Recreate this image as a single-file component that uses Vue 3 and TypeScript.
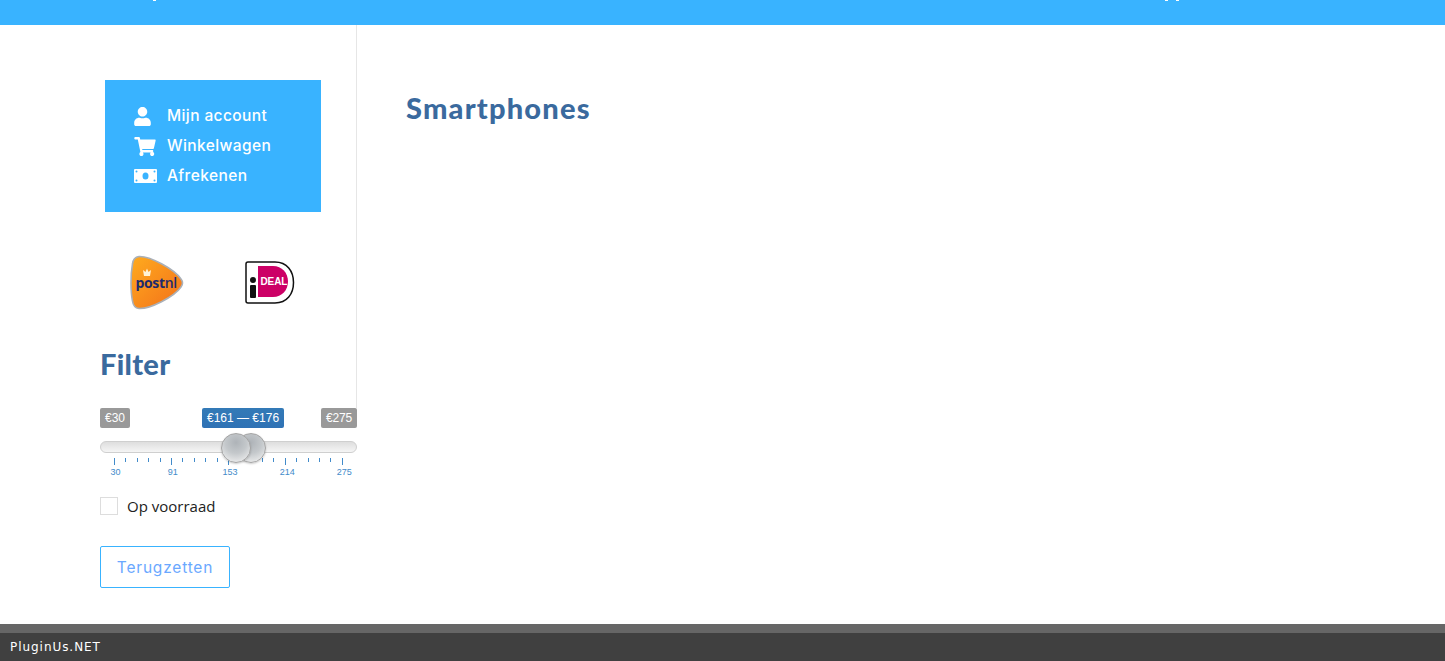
<script setup lang="ts">
const accountLinks = ["Mijn account", "Winkelwagen", "Afrekenen"];
const gridLabels = ["30", "91", "153", "214", "275"];
const ticks = Array.from({ length: 21 }, (_, i) => i % 5 === 0);
</script>

<template>
  <div class="page">
    <header class="topbar">
      <span class="desc" style="left: 153px"></span>
      <span class="desc" style="left: 1165px"></span>
      <span class="desc" style="left: 1176px"></span>
    </header>

    <main class="main">
      <aside class="sidebar">
        <div class="side-top">
          <div class="account">
            <a v-for="(link, i) in accountLinks" :key="link" class="account-link">
              <span class="account-icon">
                <svg v-if="i === 0" width="17" height="19" viewBox="0 0 448 512" fill="#fff">
                  <path d="M224 256c70.7 0 128-57.3 128-128S294.7 0 224 0 96 57.3 96 128s57.3 128 128 128zm89.6 32h-16.7c-22.2 10.2-46.9 16-72.9 16s-50.6-5.8-72.9-16h-16.7C60.2 288 0 348.2 0 422.4V464c0 26.5 21.5 48 48 48h352c26.5 0 48-21.5 48-48v-41.6c0-74.2-60.2-134.4-134.4-134.4z" />
                </svg>
                <svg v-else-if="i === 1" width="22" height="19" viewBox="0 0 576 512" fill="#fff">
                  <path d="M528.12 301.319l47.273-208C578.806 78.301 567.391 64 551.99 64H159.208l-9.166-44.81C147.758 8.021 137.93 0 126.529 0H24C10.745 0 0 10.745 0 24v16c0 13.255 10.745 24 24 24h69.883l70.248 343.435C147.325 417.1 136 435.222 136 456c0 30.928 25.072 56 56 56s56-25.072 56-56c0-15.674-6.447-29.835-16.824-40h209.647C430.447 426.165 424 440.326 424 456c0 30.928 25.072 56 56 56s56-25.072 56-56c0-22.172-12.888-41.332-31.579-50.405l5.517-24.276c3.413-15.018-8.002-29.319-23.403-29.319H218.117l-6.545-32h293.145c11.206 0 20.92-7.754 23.403-18.681z" />
                </svg>
                <svg v-else width="23" height="14" viewBox="0 0 23 14">
                  <rect width="23" height="14" rx="1" fill="#fff" />
                  <ellipse cx="11.5" cy="7" rx="3" ry="3.6" fill="#39b3ff" />
                  <circle cx="2.5" cy="2.5" r="1" fill="#39b3ff" />
                  <circle cx="20.5" cy="2.5" r="1" fill="#39b3ff" />
                  <circle cx="2.5" cy="11.5" r="1" fill="#39b3ff" />
                  <circle cx="20.5" cy="11.5" r="1" fill="#39b3ff" />
                </svg>
              </span>
              <span>{{ link }}</span>
            </a>
          </div>

          <div class="logos">
            <svg class="postnl" width="54" height="55" viewBox="0 0 54 55">
              <defs>
                <linearGradient id="pnl" x1="0" y1="0" x2="1" y2="1">
                  <stop offset="0" stop-color="#ffab1e" />
                  <stop offset="1" stop-color="#f2701a" />
                </linearGradient>
              </defs>
              <path d="M9 1.5C20 1 44 14 51 24Q54 28 51 32C44 42 20 54 9 53.5C5 53 3 50 2.5 46C.5 36 .5 20 2.5 9C3 4 5 2 9 1.5Z" fill="url(#pnl)" stroke="#aab0b8" stroke-width="1.6" />
              <path d="M14 21L13 15L15.500 17L17 13.500L18.500 17L21 15L20 21Z" fill="#fff3d6" />
              <text x="5.5" y="33" class="pnl-text" fill="#1d2a6d">post<tspan font-weight="600">nl</tspan></text>
            </svg>
            <svg class="ideal" width="50" height="43" viewBox="0 0 50 43">
              <path d="M3 1H30C42 1 48.500 10 48.500 21.500C48.500 33 42 42 30 42H3Q1 42 1 40V3Q1 1 3 1Z" fill="#fff" stroke="#111" stroke-width="1.5" />
              <path d="M13 5H28C37 5 43 12 43 20.500C43 29 37 36 28 36H13Z" fill="#cc0066" />
              <circle cx="8" cy="19" r="3" fill="#111" />
              <rect x="5" y="24" width="6" height="13" rx="1" fill="#111" />
              <text x="15.5" y="24" class="ideal-text" fill="#fff">DEAL</text>
            </svg>
          </div>

          <h2 class="heading filter-title">Filter</h2>
        </div>

        <div class="slider">
          <div class="slider-labels">
            <span class="badge grey">€30</span>
            <span class="badge grey">€275</span>
          </div>
          <span class="badge blue">€161 — €176</span>
          <div class="track"></div>
          <span class="handle back"></span>
          <span class="handle front"></span>
          <div class="ticks">
            <i v-for="(major, i) in ticks" :key="i" :class="{ major }"></i>
          </div>
          <div class="grid-labels">
            <span v-for="label in gridLabels" :key="label">{{ label }}</span>
          </div>
        </div>

        <label class="stock">
          <span class="box"></span>
          <span>Op voorraad</span>
        </label>

        <button class="reset" type="button">Terugzetten</button>
      </aside>

      <section class="content">
        <h1 class="heading">Smartphones</h1>
      </section>
    </main>

    <footer class="footer">
      <div class="footer-strip"></div>
      <div class="footer-bar">PluginUs.NET</div>
    </footer>
  </div>
</template>

<style scoped>
.page {
  display: flex;
  flex-direction: column;
  height: 661px;
  overflow: hidden;
  background: #fff;
}

.topbar {
  position: relative;
  height: 25px;
  flex: none;
  background: #39b3ff;
}

.desc {
  position: absolute;
  top: 0;
  width: 3px;
  height: 1px;
  background: #fff;
}

.main {
  flex: 1;
  display: flex;
  min-height: 0;
}

.sidebar {
  width: 257px;
  margin-left: 100px;
  flex: none;
}

.side-top {
  height: 383px;
  padding-top: 55px;
  box-sizing: border-box;
  border-right: 1px solid #e6e6e6;
}

.account {
  width: 216px;
  height: 132px;
  margin-left: 5px;
  padding: 21px 0 0 29px;
  box-sizing: border-box;
  background: #39b3ff;
  display: flex;
  flex-direction: column;
}

.account-link {
  display: flex;
  align-items: center;
  height: 30px;
  color: #fff;
  font: 500 15.5px/30px Inter, "Liberation Sans", sans-serif;
  letter-spacing: 0.4px;
}

.account-icon {
  width: 33px;
  flex: none;
  display: flex;
  align-items: center;
}

.logos {
  display: flex;
  align-items: center;
  gap: 61px;
  margin: 43px 0 0 30px;
  height: 55px;
}

.pnl-text {
  font: 700 14px "Open Sans", sans-serif;
  letter-spacing: -0.35px;
}

.ideal-text {
  font: 700 10px "Liberation Sans", sans-serif;
  letter-spacing: -0.1px;
}

.heading {
  margin: 0;
  color: #3a6a9e;
  font: 900 29px/34px Lato, sans-serif;
  letter-spacing: 1.2px;
}

.filter-title {
  margin-top: 37px;
  letter-spacing: 0.3px;
}

.slider {
  position: relative;
  height: 72px;
}

.slider-labels {
  display: flex;
  justify-content: space-between;
}

.badge {
  display: block;
  height: 20px;
  padding: 0 5px;
  border-radius: 2px;
  color: #fff;
  font: 12px/20px "Liberation Sans", sans-serif;
}

.grey {
  background: #999;
}

.grey:last-child {
  letter-spacing: -0.15px;
}

.blue {
  position: absolute;
  top: 0;
  left: 102px;
  background: linear-gradient(#337ab7, #2f72b5);
}

.track {
  height: 12px;
  margin-top: 13px;
  box-sizing: border-box;
  border: 1px solid #cfcfcf;
  border-radius: 6px;
  background: linear-gradient(#dedede, #f5f5f5);
}

.handle {
  position: absolute;
  top: 25px;
  width: 30px;
  height: 30px;
  box-sizing: border-box;
  border: 1px solid #a4a4a4;
  border-radius: 50%;
  background: radial-gradient(circle at 50% 30%, #aeb3b8 0, #c4c8cb 45%, #f3f3f3 95%);
  box-shadow: 0 1px 2px rgba(0, 0, 0, 0.2);
}

.back {
  left: 136px;
}

.front {
  left: 121px;
}

.ticks {
  display: flex;
  justify-content: space-between;
  margin: 5px 14px 0;
  width: 229px;
  height: 7px;
}

.ticks i {
  width: 1px;
  height: 4px;
  background: #428bca;
}

.ticks i.major {
  height: 7px;
}

.grid-labels {
  display: flex;
  margin: 2px 0 0 -13px;
  width: 290px;
}

.grid-labels span {
  width: 57.2px;
  text-align: center;
  color: #428bca;
  font: 9px/11px "Liberation Sans", sans-serif;
}

.stock {
  display: flex;
  align-items: center;
  gap: 9px;
  margin-top: 17px;
  color: #222;
  font: 15px/18px "Open Sans", sans-serif;
}

.box {
  width: 18px;
  height: 18px;
  box-sizing: border-box;
  border: 1px solid #ddd;
  background: #fff;
}

.reset {
  display: block;
  width: 130px;
  height: 42px;
  margin-top: 31px;
  padding: 0;
  border: 1px solid #39b3ff;
  border-radius: 2px;
  background: #fff;
  color: #6aa8ff;
  font: 400 15.5px Inter, sans-serif;
  letter-spacing: 0.8px;
}

.content {
  padding: 66px 0 0 49px;
}

.footer {
  flex: none;
}

.footer-strip {
  height: 9px;
  background: #666;
}

.footer-bar {
  height: 28px;
  padding-left: 10px;
  background: #404040;
  color: #fff;
  font: 12px/28px "DejaVu Sans", sans-serif;
  letter-spacing: 0.95px;
}
</style>
